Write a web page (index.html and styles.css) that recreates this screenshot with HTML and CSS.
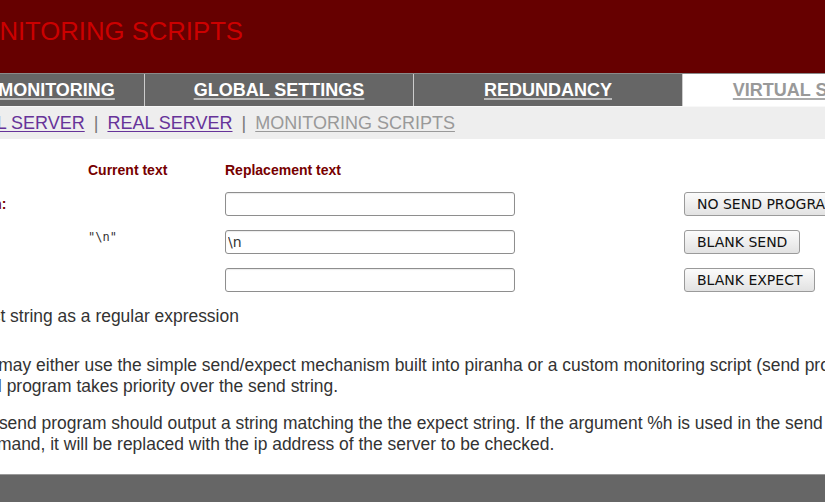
FILE: index.html
```html
<!DOCTYPE html>
<html lang="en">
<head>
<meta charset="utf-8">
<title>Piranha - Monitoring Scripts</title>
<link rel="stylesheet" href="styles.css">
</head>
<body>
<div class="page">
  <header class="masthead">
    <h1 class="title">MONITORING SCRIPTS</h1>
  </header>
  <nav class="tabs">
    <a class="tab" href="#">CONTROL/MONITORING</a>
    <a class="tab" href="#">GLOBAL SETTINGS</a>
    <a class="tab" href="#">REDUNDANCY</a>
    <a class="tab tab-active" href="#">VIRTUAL SERVERS</a>
  </nav>
  <nav class="subnav">
    <a class="sublink" href="#">VIRTUAL SERVER</a> <span class="sep">|</span> <a class="sublink" href="#">REAL SERVER</a> <span class="sep">|</span> <a class="sublink sublink-current" href="#">MONITORING SCRIPTS</a>
  </nav>
  <main class="content">
    <form class="form">
      <span></span>
      <span class="colhead">Current text</span>
      <span class="colhead">Replacement text</span>
      <span></span>
      <span></span>

      <label class="rowlabel" for="sendprog">Sending Program:</label>
      <span class="current"></span>
      <input class="field" id="sendprog" type="text" value="">
      <span></span>
      <button class="btn" type="button">NO SEND PROGRAM</button>

      <label class="rowlabel" for="send">Send:</label>
      <span class="current">"\n"</span>
      <input class="field" id="send" type="text" value="\n">
      <span></span>
      <button class="btn" type="button">BLANK SEND</button>

      <label class="rowlabel" for="expect">Expect:</label>
      <span class="current"></span>
      <input class="field" id="expect" type="text" value="">
      <span></span>
      <button class="btn" type="button">BLANK EXPECT</button>
    </form>
    <div class="regex">
      <input class="check" type="checkbox" id="regex">
      <label for="regex">Treat expect string as a regular expression</label>
    </div>
    <p class="note">You may either use the simple send/expect mechanism built into piranha or a custom monitoring script (send program). The<br>send program takes priority over the send string.</p>
    <p class="note">The send program should output a string matching the the expect string. If the argument %h is used in the send<br>command, it will be replaced with the ip address of the server to be checked.</p>
  </main>
  <footer class="footer"></footer>
</div>
</body>
</html>
```

FILE: styles.css
```css
html, body {
  margin: 0;
  padding: 0;
  overflow: hidden;
  background: #ffffff;
}

body {
  font-family: "Liberation Sans", Arial, sans-serif;
  color: #333333;
}

.page {
  margin-left: -125px;
  width: 1200px;
}

.masthead {
  height: 73px;
  background: #660000;
  box-sizing: border-box;
  padding: 18px 0 0 83px;
}

.title {
  margin: 0;
  font-size: 25.7px;
  line-height: 26px;
  font-weight: normal;
  color: #cc0000;
}

.tabs {
  display: flex;
  gap: 1px;
  background: #cccccc;
  border-top: 1px solid #8a8a8a;
  height: 32px;
}

.tab {
  flex: 0 0 268px;
  background: #666666;
  color: #ffffff;
  font-weight: bold;
  font-size: 18px;
  line-height: 32px;
  text-align: center;
  text-decoration: underline;
  text-decoration-color: #bbbbbb;
  text-decoration-thickness: 2px;
  text-underline-offset: 2px;
}

.tab:first-child {
  flex-basis: 269px;
}

.tab-active {
  background: #ffffff;
  color: #999999;
  text-decoration-color: #aaaaaa;
}

.subnav {
  height: 32px;
  background: #eeeeee;
  border-top: 1px solid #f8f8f8;
  padding-left: 56px;
  font-size: 18px;
  line-height: 32px;
  white-space: nowrap;
}

.sublink {
  color: #663399;
  text-decoration: underline;
  text-underline-offset: 2px;
}

.sublink-current {
  color: #999999;
}

.sep {
  color: #777777;
  margin: 0 4px;
}

.content {
  padding-top: 23px;
}

.form {
  display: grid;
  grid-template-columns: 203px 137px 290px 169px auto;
  grid-template-rows: 16px 24px 24px 24px;
  row-gap: 14px;
  padding-left: 10px;
  align-items: center;
  margin: 0;
}

.colhead {
  font-size: 14px;
  line-height: 16px;
  font-weight: bold;
  color: #770000;
  white-space: nowrap;
}

.rowlabel {
  font-size: 14px;
  font-weight: bold;
  color: #770000;
  white-space: nowrap;
}

.current {
  align-self: start;
  font-family: "DejaVu Sans Mono", monospace;
  font-size: 12px;
  line-height: 14px;
  color: #333333;
}

.field {
  box-sizing: border-box;
  width: 290px;
  height: 24px;
  margin: 0;
  padding: 0 2px;
  border: 1px solid #8e8e8e;
  border-radius: 3px;
  background: #ffffff;
  font-family: "DejaVu Sans", sans-serif;
  font-size: 14px;
  color: #333333;
  box-shadow: inset 0 1px 1px rgba(0, 0, 0, 0.08);
}

.btn {
  justify-self: start;
  box-sizing: border-box;
  height: 24px;
  margin: 0;
  padding: 0 12px;
  border: 1px solid #9a9a9a;
  border-radius: 3px;
  background: linear-gradient(#fbfbfb, #e2e2e2);
  font-family: "DejaVu Sans", sans-serif;
  font-size: 14px;
  color: #111111;
  white-space: nowrap;
}

.regex {
  display: flex;
  align-items: center;
  margin-top: 14px;
  padding-left: 15px;
  font-size: 17.45px;
  line-height: 21px;
  white-space: nowrap;
}

.check {
  margin: 0 6px 0 0;
  width: 13px;
  height: 13px;
}

.note {
  margin: 28px 0 0 89px;
  font-size: 17.45px;
  line-height: 21px;
  white-space: nowrap;
}

.note + .note {
  margin-top: 16px;
}

.footer {
  margin-top: 19px;
  height: 40px;
  background: #666666;
  border-top: 1px solid #9a9a9a;
}
```
